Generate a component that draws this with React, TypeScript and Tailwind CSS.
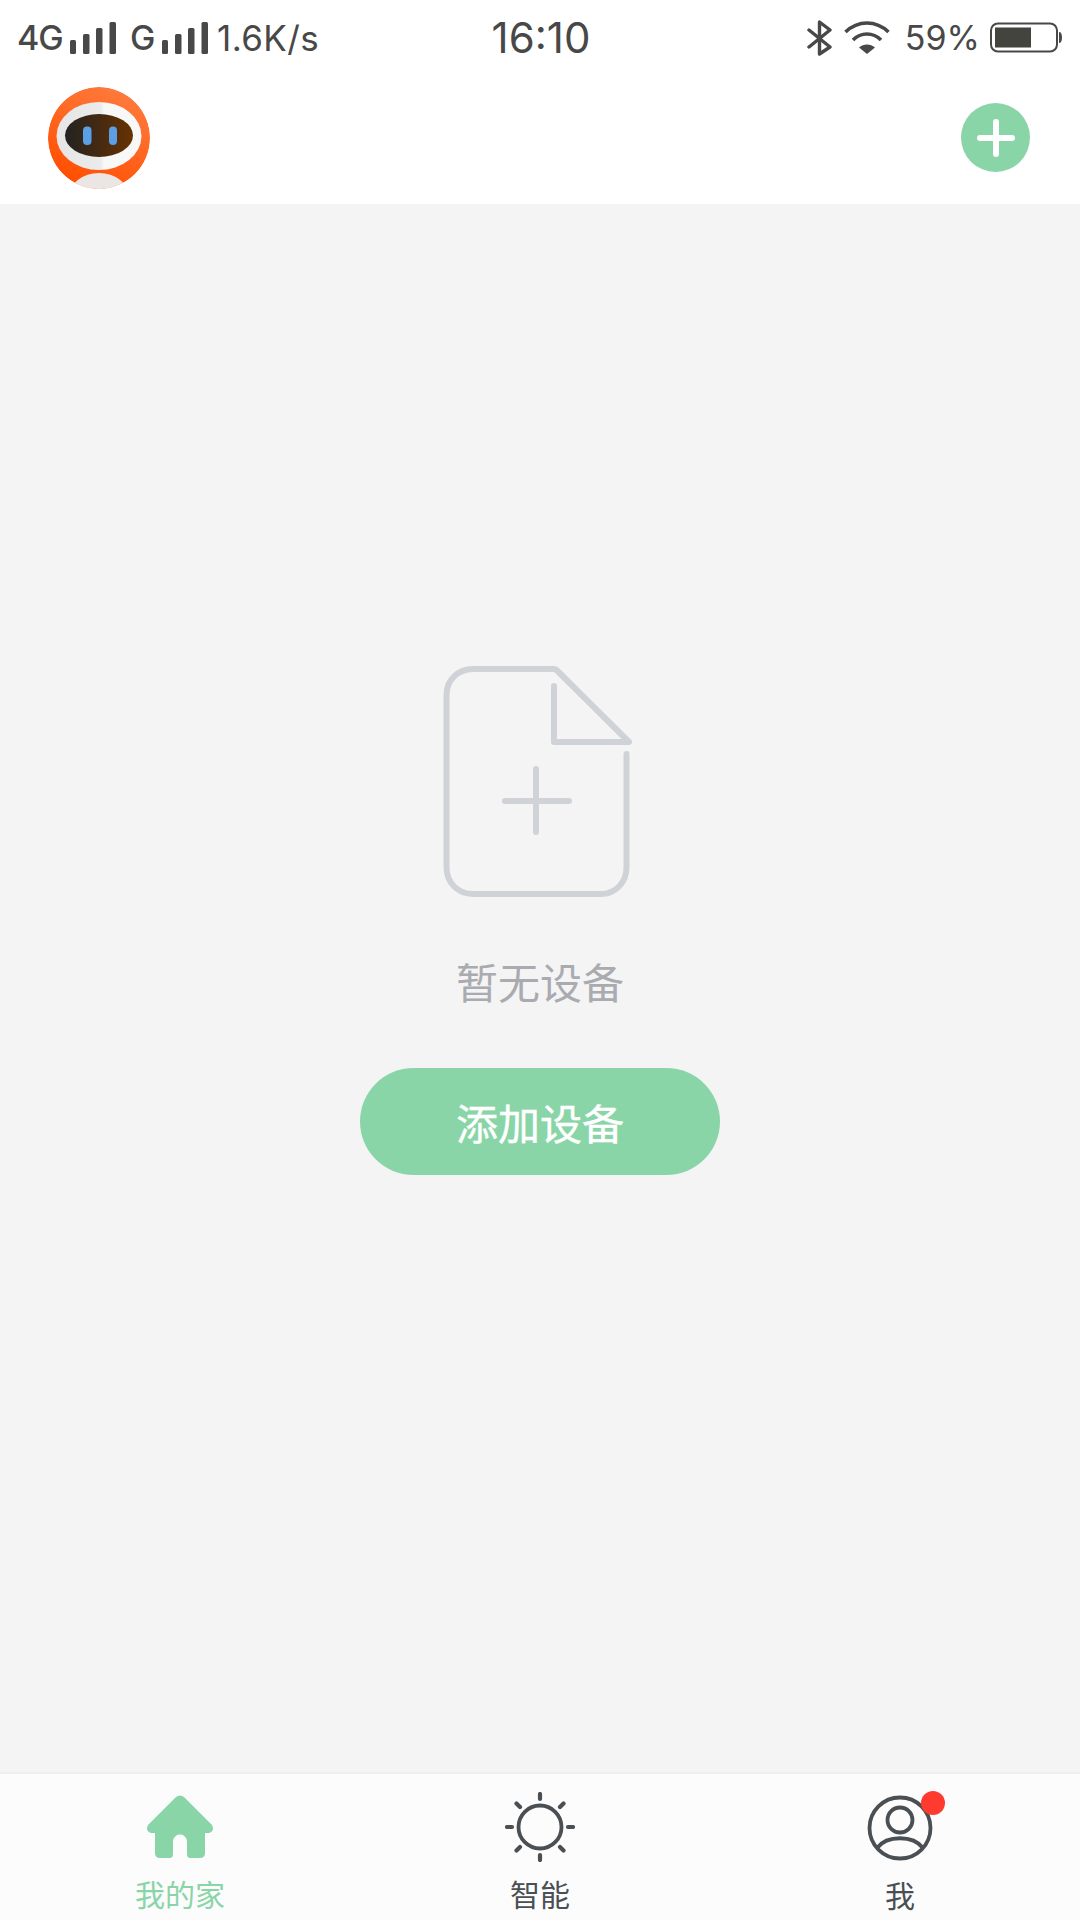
const Bars = () => (
  <svg width="46" height="32" viewBox="0 0 46 32" fill="#484848">
    <rect x="0" y="18" width="6" height="14" rx="1.5" />
    <rect x="13" y="12" width="6.5" height="20" rx="1.5" />
    <rect x="26" y="6" width="6.5" height="26" rx="1.5" />
    <rect x="39.5" y="0" width="6.5" height="32" rx="1.5" />
  </svg>
);

const Robot = () => (
  <svg width="102" height="102" viewBox="0 0 102 102" className="block">
    <defs>
      <linearGradient id="org" x1="0.8" y1="0" x2="0.3" y2="1">
        <stop offset="0" stopColor="#ff7d40" />
        <stop offset="1" stopColor="#ff4d00" />
      </linearGradient>
      <linearGradient id="visor" x1="0" y1="0" x2="1" y2="0">
        <stop offset="0" stopColor="#222222" />
        <stop offset="1" stopColor="#683200" />
      </linearGradient>
      <linearGradient id="shell" x1="0" y1="0" x2="1" y2="0">
        <stop offset="0" stopColor="#e6e6e6" />
        <stop offset="0.52" stopColor="#ebebeb" />
        <stop offset="0.56" stopColor="#f8f8f8" />
        <stop offset="1" stopColor="#f8f8f8" />
      </linearGradient>
      <clipPath id="cp"><circle cx="51" cy="51" r="51" /></clipPath>
    </defs>
    <g clipPath="url(#cp)">
      <circle cx="51" cy="51" r="51" fill="url(#org)" />
      <ellipse cx="51" cy="110" rx="30" ry="24" fill="#ebe5e3" />
      <ellipse cx="51" cy="49" rx="42.500" ry="34" fill="url(#shell)" />
      <ellipse cx="51" cy="48.500" rx="34" ry="21.500" fill="url(#visor)" />
      <rect x="35" y="39.500" width="8.500" height="18.500" rx="4" fill="#5b9fe6" />
      <rect x="61" y="39.500" width="8" height="18.500" rx="4" fill="#5b9fe6" />
    </g>
  </svg>
);

export default function App() {
  const font = "font-['Inter','Liberation_Sans','Noto_Sans_CJK_SC',sans-serif]";
  const cjk = "font-['Noto_Sans_CJK_SC','Noto_Sans',sans-serif]";
  return (
    <div className={`w-[1080px] h-[1920px] flex flex-col bg-[#f4f4f4] overflow-hidden ${font}`}>
      <header className="bg-white h-[204px] shrink-0 flex flex-col">
        <div className="h-[75px] grid grid-cols-3 items-center text-[#484848]">
          <div className="flex items-center pl-[17px] pt-[1px]">
            <span className="text-[34px] leading-none font-medium tracking-[-1px] w-[53px]">4G</span>
            <Bars />
            <span className="text-[34px] leading-none font-medium ml-[14px] w-[32px]">G</span>
            <Bars />
            <span className="text-[35px] leading-none ml-[9px] tracking-[0.4px] whitespace-nowrap">1.6K/s</span>
          </div>
          <div className="text-center text-[42px] leading-none pl-[2px]">16:10</div>
          <div className="flex items-center justify-end pr-[18px]">
            <svg width="26" height="36" viewBox="0 0 26 36" fill="none" stroke="#484848" strokeWidth="3.400" strokeLinejoin="round" strokeLinecap="round">
              <path d="M2 10 L23 27 L12.500 34 V2 L23 10 L2 27" />
            </svg>
            <svg width="46" height="34" viewBox="0 0 46 34" className="ml-[11px]" fill="none" stroke="#484848" strokeWidth="3.600">
              <path d="M1.500 11 C14 -1 32 -1 44.500 11" />
              <path d="M9 19 C17 11 29 11 37 19" />
              <path d="M23 33 L15 26.500 C19.500 22.500 26.500 22.500 31 26.500 Z" fill="#484848" stroke="none" />
            </svg>
            <span className="text-[34px] leading-none ml-[15px]">59%</span>
            <svg width="72" height="32" viewBox="0 0 72 32" className="ml-[10px]" fill="none">
              <rect x="1" y="1.500" width="66" height="28" rx="7" stroke="#484848" strokeWidth="2" />
              <rect x="5" y="5.500" width="36" height="20" fill="#43443e" />
              <path d="M69 10 C71 10 72 12 72 15.500 C72 19 71 21 69 21 Z" fill="#484848" />
            </svg>
          </div>
        </div>
        <div className="flex-1 flex items-start justify-between pl-[48px] pr-[50px] pt-[12px]">
          <Robot />
          <button className="w-[69px] h-[69px] rounded-full bg-[#8ad5a8] mt-[16px] flex items-center justify-center">
            <svg width="38" height="38" viewBox="0 0 38 38" stroke="#fff" strokeWidth="6" strokeLinecap="round">
              <path d="M19 3 V35 M3 19 H35" />
            </svg>
          </button>
        </div>
      </header>

      <main className="flex-1 flex flex-col items-center pt-[462px]">
        <svg width="190" height="231" viewBox="0 0 190 231" fill="none" stroke="#cfd2d7" strokeWidth="6" strokeLinecap="round" strokeLinejoin="round" className="ml-[-4px]">
          <path d="M183.500 88 V201 C183.500 217 172 228 158 228 H30 C15 228 3.500 217 3.500 201 V29 C3.500 14 15 3 30 3 H111 Q113 3 114 4.500 L186 76 H111 V20" />
          <path d="M93 103 V166 M62 135 H126" />
        </svg>
        <div className={`mt-[54px] text-[42px] leading-[60px] text-[#a9abb1] ${cjk}`}>暂无设备</div>
        <button className={`mt-[57px] w-[360px] h-[107px] rounded-full bg-[#8ad5a8] text-white text-[42px] leading-none [-webkit-text-stroke:0.4px_white] ${cjk}`}>添加设备</button>
      </main>

      <nav className={`h-[148px] shrink-0 bg-[#fcfcfc] border-t-2 border-[#efefef] grid grid-cols-3 ${cjk}`}>
        <div className="flex flex-col items-center">
          <svg width="70" height="66" viewBox="0 0 70 66" fill="#8ad5a8" className="mt-[21px]">
            <path d="M31 2 Q35 -1 39 2 L67 30 Q70 36 64 38 H60 V58 Q60 63 55 63 H45 Q42 63 42 59 V47 C42 37 28 37 28 47 V59 Q28 63 25 63 H15 Q10 63 10 58 V38 H6 Q0 36 3 30 Z" />
          </svg>
          <span className="text-[30px] leading-none mt-[17px] text-[#8ad5a8]">我的家</span>
        </div>
        <div className="flex flex-col items-center">
          <svg width="70" height="70" viewBox="0 0 70 70" fill="none" stroke="#4a4f53" strokeWidth="3.800" strokeLinecap="round" className="mt-[18px]">
            <circle cx="35" cy="35" r="21.500" />
            <path d="M35 2 V7 M35 63 V68 M2 35 H7 M63 35 H68 M11.500 11.500 L15 15 M55 55 L58.500 58.500 M11.500 58.500 L15 55 M55 15 L58.500 11.500" strokeWidth="4.200" />
          </svg>
          <span className="text-[30px] leading-none mt-[16px] text-[#4a4f53]">智能</span>
        </div>
        <div className="flex flex-col items-center">
          <div className="relative w-[66px] h-[66px] mt-[21px]">
            <svg width="66" height="66" viewBox="0 0 66 66" fill="none" stroke="#4a4f53" strokeWidth="3.800">
              <circle cx="33" cy="33" r="30.500" />
              <circle cx="33" cy="25" r="12.500" />
              <path d="M10 53 C20 40 46 40 56 53" />
            </svg>
            <span className="absolute left-[54px] top-[-4px] w-[24px] h-[24px] rounded-full bg-[#ff3b30]" />
          </div>
          <span className="text-[30px] leading-none mt-[18px] text-[#4a4f53]">我</span>
        </div>
      </nav>
    </div>
  );
}
